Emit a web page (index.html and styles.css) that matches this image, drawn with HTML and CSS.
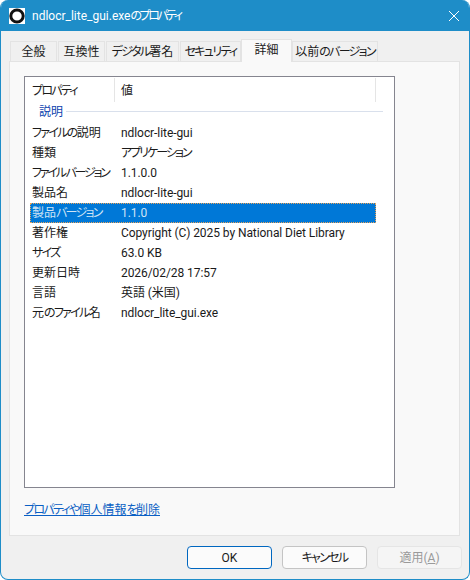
FILE: index.html
```html
<!DOCTYPE html>
<html lang="ja">
<head>
<meta charset="utf-8">
<title>ndlocr_lite_gui.exeのプロパティ</title>
<link rel="stylesheet" href="styles.css">
</head>
<body>
<div class="window">
  <header class="titlebar">
    <svg class="app-icon" viewBox="0 0 16 16" width="16" height="16"><rect width="16" height="16" fill="#fff"/><ellipse cx="8" cy="8" rx="6.2" ry="6" fill="none" stroke="#111" stroke-width="3"/></svg>
    <span class="title">ndlocr_lite_gui.exe<span class="kn">のプロパティ</span></span>
    <svg class="close" viewBox="0 0 10 10" width="10" height="10"><path d="M0 0L10 10M10 0L0 10" stroke="#fff" stroke-width="1" fill="none"/></svg>
  </header>
  <div class="content">
    <nav class="tabs">
      <div class="tab t1">全般</div>
      <div class="tab t2">互換性</div>
      <div class="tab t3"><span class="kn">デジタル</span>署名</div>
      <div class="tab t4"><span class="kn">セキュリティ</span></div>
      <div class="tab active t5">詳細</div>
      <div class="tab t6">以前<span class="kn">のバージョン</span></div>
    </nav>
    <section class="pane">
      <div class="list">
        <div class="list-head"><div class="hcell h1"><span class="kn">プロパティ</span></div><div class="hcell h2">値</div></div>
        <div class="group"><span class="group-name">説明</span><span class="group-line"></span></div>
        <div class="row"><span class="k"><span class="kn">ファイルの</span>説明</span><span class="v">ndlocr-lite-gui</span></div>
        <div class="row"><span class="k">種類</span><span class="v"><span class="kn">アプリケーション</span></span></div>
        <div class="row"><span class="k"><span class="kn tight">ファイル バージョン</span></span><span class="v">1.1.0.0</span></div>
        <div class="row"><span class="k">製品名</span><span class="v">ndlocr-lite-gui</span></div>
        <div class="row selected"><span class="k">製品<span class="kn">バージョン</span></span><span class="v">1.1.0</span></div>
        <div class="row"><span class="k">著作権</span><span class="v">Copyright (C) 2025 by National Diet Library</span></div>
        <div class="row"><span class="k"><span class="kn">サイズ</span></span><span class="v">63.0 KB</span></div>
        <div class="row"><span class="k">更新日時</span><span class="v">2026/02/28 17:57</span></div>
        <div class="row"><span class="k">言語</span><span class="v">英語 (米国)</span></div>
        <div class="row"><span class="k">元<span class="kn">のファイル</span>名</span><span class="v">ndlocr_lite_gui.exe</span></div>
      </div>
      <a class="link" href="#"><span class="kn">プロパティや</span>個人情報<span class="kn">を</span>削除</a>
    </section>
    <footer class="buttons">
      <button class="btn primary">OK</button>
      <button class="btn"><span class="kn">キャンセル</span></button>
      <button class="btn disabled">適用(<u>A</u>)</button>
    </footer>
  </div>
</div>
</body>
</html>
```
FILE: styles.css
```css
* { box-sizing: border-box; }
html, body { margin: 0; padding: 0; background: #fff; }
body { width: 470px; height: 580px; overflow: hidden; font: 12px/16px Roboto, "Noto Sans CJK JP", sans-serif; font-feature-settings: "palt" 1; color: #1a1a1a; }
.kn { letter-spacing: -1.7px; }
.kn.tight { letter-spacing: -2.2px; }
.window { width: 470px; height: 580px; display: flex; flex-direction: column; background: #f0f0f0; border: 1px solid #1e8dc8; border-top: 0; border-radius: 8px; overflow: hidden; }
.titlebar { height: 31px; flex: none; background: #1e8dc8; display: flex; align-items: center; padding: 0 10px 0 8px; color: #fff; }
.app-icon { flex: none; }
.title { margin-left: 7px; flex: 1; font-size: 12px; }
.title .kn { letter-spacing: -2.5px; }
.close { flex: none; }
.content { flex: 1; display: flex; flex-direction: column; padding: 8px 9px 0 8px; }
.tabs { display: flex; height: 22px; align-items: flex-end; padding-left: 1px; position: relative; z-index: 1; }
.tab { height: 20px; background: #f0f0f0; border: 1px solid #e3e3e3; border-bottom: 0; margin-right: 1px; display: flex; align-items: center; justify-content: center; color: #1a1a1a; white-space: nowrap; }
.t1 { width: 47px; } .t2 { width: 47px; } .t3 { width: 73px; } .t4 { width: 61px; margin-right: 0; }
.t5 { width: 51px; } .t6 { width: 86px; }
.tab.active { height: 23px; margin-bottom: -1px; background: #f9f9f9; margin-right: 0; padding-bottom: 2px; }
.pane { height: 475px; background: #f9f9f9; border: 1px solid #e3e3e3; padding: 14px 0 0 14px; display: flex; flex-direction: column; align-items: flex-start; }
.list { width: 371px; height: 412px; background: #fff; border: 1px solid #85858f; padding: 1px 0 0 0; flex: none; }
.list-head { display: flex; height: 25px; }
.hcell { height: 24px; display: flex; align-items: center; border-right: 1px solid #e5e5e5; padding-top: 2px; }
.h1 { width: 90px; padding-left: 7px; }
.h2 { width: 261px; padding-left: 6px; }
.group { height: 17px; display: flex; align-items: center; padding-left: 14px; color: #0b3fae; }
.group-line { flex: none; width: 317px; height: 1px; background: #d9e0ec; margin-left: 3px; }
.row { height: 20px; width: 346px; margin-left: 5px; display: flex; align-items: center; }
.group + .row { margin-top: 3px; }
.k { width: 91px; padding-left: 2px; white-space: nowrap; flex: none; }
.v { white-space: nowrap; letter-spacing: -0.07px; }
.v .kn { letter-spacing: -2px; }
.row.selected { background: #0078d7; color: #cfe4f5; outline: 1px dotted #e9a35a; outline-offset: -1px; }
.link { margin-top: 14px; color: #0a5fc4; text-decoration: underline; }
.buttons { display: flex; gap: 10px; justify-content: flex-end; padding: 10px 0 0 0; margin-right: -2px; }
.btn { width: 85px; height: 23px; padding: 0; border-radius: 4px; border: 1px solid #c4c4c4; background: #fbfbfb; font: inherit; font-feature-settings: inherit; color: #1a1a1a; }
.btn.primary { border-color: #0067c0; }
.btn.disabled { border-color: #e5e5e5; background: #f5f5f5; color: #9a9a9a; }
```
